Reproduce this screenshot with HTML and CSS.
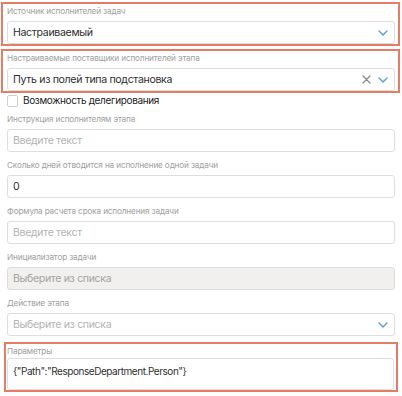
FILE: index.html
```html
<!DOCTYPE html>
<html lang="ru">
<head>
<meta charset="utf-8">
<link rel="stylesheet" href="styles.css">
</head>
<body>
<div class="form">
  <div class="field hl hl-top">
    <div class="label">Источник исполнителей задач</div>
    <div class="input select">
      <span class="value">Настраиваемый</span>
      <span class="icons">
        <svg class="chev" width="10" height="6" viewBox="0 0 10 6"><path d="M1 1l4 4 4-4" fill="none" stroke="#5b9ad8" stroke-width="1.4" stroke-linecap="round" stroke-linejoin="round"/></svg>
      </span>
    </div>
  </div>
  <div class="field hl hl-second">
    <div class="label">Настраиваемые поставщики исполнителей этапа</div>
    <div class="input select">
      <span class="value">Путь из полей типа подстановка</span>
      <span class="icons">
        <svg class="clear" width="9" height="9" viewBox="0 0 9 9"><path d="M1 1l7 7M8 1l-7 7" fill="none" stroke="#8a8a8a" stroke-width="1.3" stroke-linecap="round"/></svg>
        <svg class="chev" width="10" height="6" viewBox="0 0 10 6"><path d="M1 1l4 4 4-4" fill="none" stroke="#5b9ad8" stroke-width="1.4" stroke-linecap="round" stroke-linejoin="round"/></svg>
      </span>
    </div>
  </div>
  <label class="check">
    <span class="box"></span>
    <span class="check-text">Возможность делегирования</span>
  </label>
  <div class="field">
    <div class="label">Инструкция исполнителям этапа</div>
    <div class="input"><span class="ph">Введите текст</span></div>
  </div>
  <div class="field">
    <div class="label">Сколько дней отводится на исполнение одной задачи</div>
    <div class="input"><span class="value">0</span></div>
  </div>
  <div class="field">
    <div class="label">Формула расчета срока исполнения задачи</div>
    <div class="input"><span class="ph">Введите текст</span></div>
  </div>
  <div class="field">
    <div class="label">Инициализатор задачи</div>
    <div class="input disabled"><span class="ph dis">Выберите из списка</span></div>
  </div>
  <div class="field">
    <div class="label">Действие этапа</div>
    <div class="input select">
      <span class="ph">Выберите из списка</span>
      <span class="icons">
        <svg class="chev" width="10" height="6" viewBox="0 0 10 6"><path d="M1 1l4 4 4-4" fill="none" stroke="#5b9ad8" stroke-width="1.4" stroke-linecap="round" stroke-linejoin="round"/></svg>
      </span>
    </div>
  </div>
  <div class="field hl hl-params">
    <div class="label">Параметры</div>
    <div class="textarea"><span class="value">{"Path":"ResponseDepartment.Person"}</span></div>
  </div>
</div>
</body>
</html>
```
FILE: styles.css
```css
* { box-sizing: border-box; }
html, body { margin: 0; padding: 0; background: #fff; }
body {
  font-family: Inter, "Noto Sans", "Liberation Sans", sans-serif;
  color: #2b2b2b;
}
.form {
  width: 402px;
  padding: 2px 7px 0 7px;
  display: flex;
  flex-direction: column;
}
.field {
  display: flex;
  flex-direction: column;
  margin-bottom: 6px;
}
.label {
  font-size: 8.2px;
  line-height: 14px;
  letter-spacing: -0.15px;
  color: #a0a0a0;
  margin-bottom: 3px;
  white-space: nowrap;
}
.input {
  height: 23px;
  border: 1px solid #dedede;
  border-radius: 3px;
  background: #fff;
  display: flex;
  align-items: center;
  padding: 0 6px 0 5px;
  font-size: 10.6px;
  letter-spacing: -0.35px;
}
.input.disabled { background: #f1f0ef; border-color: #dcdcdc; }
.value { color: #2f2f2f; }
.ph { color: #b3b3b3; }
.ph.dis { color: #a3a3a3; }
.select { justify-content: space-between; }
.icons { display: flex; align-items: center; gap: 7px; }
.clear { display: block; }
.chev { display: block; margin-top: 1px; }
.hl {
  border: 2px solid #e57c66;
  margin-left: -6px;
  margin-right: -5px;
  padding: 0 3px 0 4px;
  margin-bottom: 0;
}
.hl-top { margin-top: 0; }
.hl-second { margin-top: 3px; }
.hl-params {
  margin-left: -3px;
  margin-right: -3px;
  padding: 0 2px 0 1px;
}
.hl-params .label { margin-bottom: 0; }
.textarea {
  height: 32px;
  border: 1px solid #dedede;
  border-radius: 3px;
  padding: 5px 5px;
  font-size: 10px;
  letter-spacing: -0.45px;
  line-height: 14px;
}
.check {
  display: flex;
  align-items: center;
  height: 14px;
  margin-bottom: 5px;
}
.box {
  width: 11px;
  height: 12px;
  border: 1px solid #cfcfcf;
  border-radius: 2px;
  background: #fff;
  margin-right: 5px;
  margin-top: 1px;
}
.check-text {
  font-size: 10px;
  letter-spacing: -0.35px;
  color: #222;
}
```
